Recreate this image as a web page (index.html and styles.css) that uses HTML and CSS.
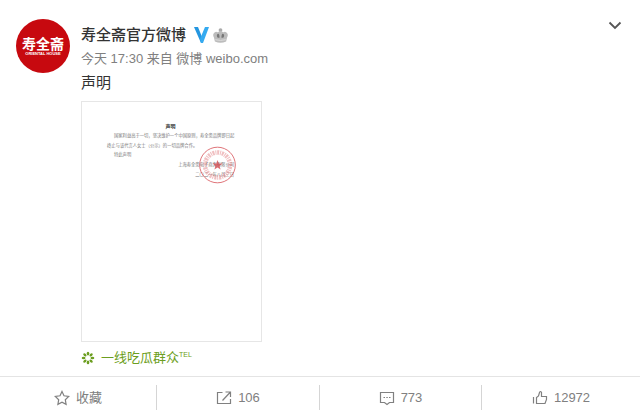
FILE: index.html
```html
<!DOCTYPE html>
<html lang="zh-CN">
<head>
<meta charset="utf-8">
<meta name="viewport" content="width=device-width, initial-scale=1">
<title>寿全斋官方微博</title>
<link rel="stylesheet" href="styles.css">
</head>
<body>
<article class="post">
  <div class="main">
    <a class="avatar" href="#" aria-label="寿全斋">
      <svg viewBox="0 0 54 54">
        <circle cx="27" cy="27" r="27" fill="#c7090f"/>
        <text class="logo-cn" x="27" y="30" text-anchor="middle">寿全斋</text>
        <text class="logo-en" x="27" y="36" text-anchor="middle">ORIENTAL HOUSE</text>
      </svg>
    </a>
    <div class="content">
      <header class="author">
        <a class="name" href="#">寿全斋官方微博</a>
        <svg class="verified" viewBox="0 0 15 16"><path d="M0 0h4l4 10-1 6z" fill="#2496e0"/><path d="M11 0h4L9 16H7L6 12z" fill="#35aaf0"/></svg>
        <svg class="crown" viewBox="0 0 16 16"><circle cx="8" cy="2.200" r="2" fill="#aaa"/><path d="M.5 6q2-3 4.500-1.500l3-1.500 3 1.500Q13.500 3 15.500 6q.8 2-.5 4l-1 4.500q-6 2.500-12 0L1 10Q-.3 8 .5 6z" fill="#bcbcbc"/><path d="M5.500 6q1.500 0 1.500 4.500H5Q3 7 5.500 6zM10.500 6Q9 6 9 10.500h2Q13 7 10.500 6z" fill="#777"/><path d="M2.500 12.500q5.500 1.500 11 0" fill="none" stroke="#ddd"/></svg>
      </header>
      <p class="meta">今天 17:30 来自 微博 weibo.com</p>
      <p class="text">声明</p>
      <a class="picture" href="#" aria-label="声明">
        <svg viewBox="0 0 179 239">
          <g class="letter" transform="scale(.1)">
            <text class="letter-title" x="885" y="260" text-anchor="middle">声明</text>
            <text x="320" y="350">国家利益高于一切，坚决维护一个中国原则，寿全斋品牌即日起</text>
            <text x="250" y="445">终止与该代言人女士（公示）的一切品牌合作。</text>
            <text x="320" y="540">特此声明</text>
            <text x="1520" y="635" text-anchor="end">上海寿全斋电子商务有限公司</text>
            <text x="1520" y="735" text-anchor="end">二〇二一年八月三日</text>
          </g>
          <g fill="none" stroke="#d4474d">
            <circle cx="135.500" cy="63" r="17.800" stroke-width="1" opacity=".75"/>
            <circle cx="135.500" cy="63" r="12.500" stroke-width="4.500" stroke-dasharray="1 .8 2 .9" opacity=".35"/>
          </g>
          <path d="M135.500 58l1.300 3.500 3.700.1-2.900 2.300 1 3.600-3.100-2.100-3.100 2.100 1-3.600-2.900-2.300 3.700-.1z" fill="#cf4047" opacity=".75"/>
        </svg>
      </a>
      <a class="tail" href="#">
        <svg viewBox="0 0 14 14" fill="#6c9e20">
          <g id="petals"><ellipse cx="7" cy="2.600" rx="1.300" ry="1.900"/><ellipse cx="7" cy="11.400" rx="1.300" ry="1.900"/></g>
          <use href="#petals" transform="rotate(45 7 7)"/><use href="#petals" transform="rotate(90 7 7)"/><use href="#petals" transform="rotate(135 7 7)"/>
        </svg>
        <span>一线吃瓜群众<sup>TEL</sup></span>
      </a>
    </div>
    <button class="more" type="button" aria-label="更多">
      <svg viewBox="0 0 14 14"><path d="M1.500 3.500L7 9l5.500-5.500" fill="none" stroke="#555" stroke-width="1.800"/></svg>
    </button>
  </div>
  <footer class="actions">
    <button class="action" type="button">
      <svg viewBox="0 0 16 16"><path d="M8 1.500l2 4.300 4.700.6-3.400 3.300.8 4.700L8 12.200l-4.100 2.200.8-4.700L1.300 6.400 6 5.800z"/></svg><span>收藏</span>
    </button>
    <button class="action" type="button">
      <svg viewBox="0 0 16 16"><path d="M6.500 2.500h-5v11h13V9M6.500 10.500L14 2.500M9.500 2h5v5"/></svg><span>106</span>
    </button>
    <button class="action" type="button">
      <svg viewBox="0 0 16 16"><path d="M1.500 2.500h13v10h-4L8 14.500l-2.500-2h-4z"/><path d="M4.500 7.500h1.500M7.300 7.500h1.500M10 7.500h1.500"/></svg><span>773</span>
    </button>
    <button class="action" type="button">
      <svg viewBox="0 0 16 16"><path d="M1.500 7v6.500"/><path d="M4.500 13.500V7.500l2-1.500 1-3.500Q8.500.5 9.500 2.500v4h5v3L13 13.500z"/></svg><span>12972</span>
    </button>
  </footer>
</article>
</body>
</html>
```
FILE: styles.css
```css
* { box-sizing: border-box; }

body {
  margin: 0;
  background: #fff;
  color: #333;
  font-family: "Liberation Sans", "Noto Sans CJK SC", sans-serif;
}

a { color: inherit; text-decoration: none; }
p { margin: 0; }
svg { display: block; }

button {
  padding: 0;
  border: 0;
  background: none;
  color: inherit;
  font: inherit;
  cursor: pointer;
}

.main {
  display: flex;
  align-items: flex-start;
  padding: 19px 18px 6px 16px;
}

.avatar { width: 54px; flex: none; }

.logo-cn {
  fill: #fff;
  font-size: 14px;
  font-weight: 700;
}

.logo-en {
  fill: #fff;
  font-family: "Liberation Sans", sans-serif;
  font-size: 4px;
  font-weight: 700;
}

.content {
  flex: 1;
  min-width: 0;
  padding: 4px 0 0 11px;
}

.author {
  display: flex;
  align-items: center;
  height: 24px;
}

.name {
  font-size: 15px;
  font-weight: 500;
  line-height: 24px;
}

.verified { width: 15px; height: 16px; margin: 0 4px 0 8px; }
.crown { width: 15px; height: 15px; }

.meta {
  color: #808080;
  font-size: 13px;
  line-height: 24px;
}

.text {
  font-size: 15px;
  line-height: 24px;
}

.picture {
  display: block;
  width: 181px;
  margin-top: 6px;
  border: 1px solid #e6e6e6;
}

.letter {
  fill: #777;
  font-family: "Noto Sans CJK SC", sans-serif;
  font-size: 43px;
}

.letter-title {
  fill: #333;
  font-size: 50px;
  font-weight: 700;
}

.tail {
  display: flex;
  align-items: center;
  gap: 6px;
  margin-top: 4px;
  color: #6c9e20;
  font-size: 13px;
  line-height: 24px;
}

.tail sup {
  font-size: 7px;
  line-height: 1;
}

.tail svg { width: 14px; height: 14px; }

.more svg { width: 14px; height: 14px; }

.actions {
  display: grid;
  grid-template-columns: 156fr 163fr 162fr 159fr;
  padding: 8px 0;
  border-top: 1px solid #e4e4e4;
}

.action {
  display: flex;
  align-items: center;
  justify-content: center;
  gap: 6px;
  height: 25px;
  color: #808080;
  font-size: 13px;
  line-height: 24px;
}

.action + .action { border-left: 1px solid #d5d5d5; }

.action svg {
  width: 16px;
  height: 16px;
  fill: none;
  stroke: #808080;
  stroke-width: 1.2;
}
```
